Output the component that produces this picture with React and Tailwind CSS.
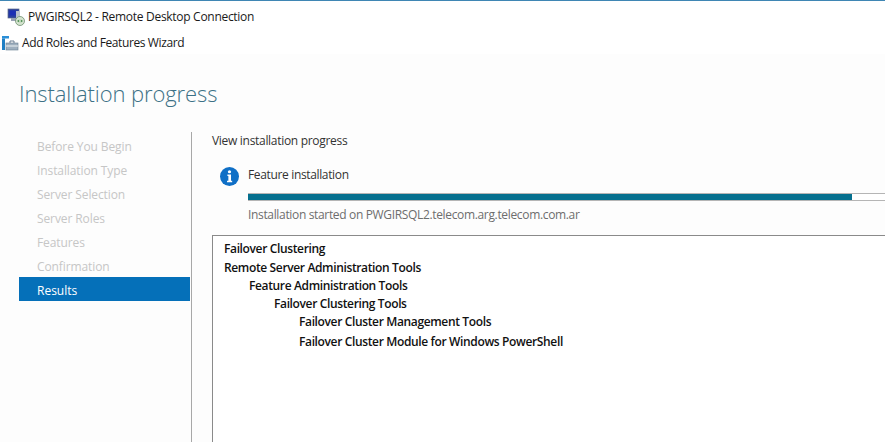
const STEPS = ['Before You Begin', 'Installation Type', 'Server Selection', 'Server Roles', 'Features', 'Confirmation'];

const RESULTS = [
  { label: 'Failover Clustering', indent: 'pl-0', height: 'h-[20px]' },
  { label: 'Remote Server Administration Tools', indent: 'pl-0', height: 'h-[18px]' },
  { label: 'Feature Administration Tools', indent: 'pl-[25px]', height: 'h-[18px]' },
  { label: 'Failover Clustering Tools', indent: 'pl-[50px]', height: 'h-[18px]' },
  { label: 'Failover Cluster Management Tools', indent: 'pl-[75px]', height: 'h-[18px]' },
  { label: 'Failover Cluster Module for Windows PowerShell', indent: 'pl-[75px]', height: 'h-[22px]' },
];

function RdpIcon() {
  return (
    <svg width="18" height="18" viewBox="0 0 18 18" className="shrink-0">
      <rect x="1" y="1" width="11" height="9" fill="#2a3f9e" stroke="#5a6a8a" strokeWidth="0.7" />
      <rect x="2.5" y="2.5" width="6" height="5" fill="#1c2fb5" />
      <rect x="4" y="10" width="7" height="3" fill="#9aa3b5" />
      <rect x="9" y="3" width="4" height="7" fill="#b9c0cc" />
      <circle cx="13" cy="13" r="4.5" fill="#d5e4cf" stroke="#6f8f70" strokeWidth="0.8" />
      <path d="M10.8 13h1.6M13.6 13h1.6M11.8 11.8l-1 1.2 1 1.2M14.2 11.8l1 1.2-1 1.2" stroke="#2f7a35" strokeWidth="0.8" fill="none" />
    </svg>
  );
}

function WizardIcon() {
  return (
    <svg width="17" height="16" viewBox="0 0 17 16" className="shrink-0">
      <rect x="0" y="1" width="7" height="2.5" fill="#2a8fd8" />
      <rect x="0" y="3.5" width="3" height="11.5" fill="#1f7fc4" />
      <rect x="4" y="8" width="12" height="7" fill="#9fb0bf" stroke="#6a7f92" strokeWidth="0.6" />
      <path d="M8 8V6h4v2" fill="none" stroke="#6a7f92" strokeWidth="1" />
      <rect x="4" y="10.5" width="12" height="1" fill="#eef1f4" />
    </svg>
  );
}

function InfoIcon() {
  return (
    <svg width="19" height="19" viewBox="0 0 20 20" className="shrink-0">
      <circle cx="10" cy="10" r="10" fill="#0f6fc6" />
      <circle cx="10" cy="5" r="1.7" fill="#fff" />
      <path d="M7.8 8h3.8v6.5h1.2V16H7.4v-1.5h1.4V9.5h-1z" fill="#fff" />
    </svg>
  );
}

export default function App() {
  return (
    <div className="w-[885px] h-[442px] overflow-hidden flex flex-col bg-[#fdfdfd] font-['Open_Sans','Noto_Sans',sans-serif] text-[12px] text-[#1a1a1a]">
      {/* RDP title bar */}
      <div className="h-[32px] shrink-0 bg-white border-t border-[#3f86b4] flex items-center pl-[7px] gap-[3px]">
        <RdpIcon />
        <span className="text-[12px] tracking-[-0.29px]">PWGIRSQL2 - Remote Desktop Connection</span>
      </div>

      {/* Wizard title bar */}
      <div className="h-[22px] shrink-0 bg-white flex items-center pl-[2px] gap-[3px]">
        <WizardIcon />
        <span className="text-[12px] tracking-[-0.39px]">Add Roles and Features Wizard</span>
      </div>

      <div className="h-[78px] shrink-0 pl-[19px] pt-[19px]">
        <h1 className="text-[22px] leading-[40px] font-light text-[#3c7186] tracking-[-0.1px]">Installation progress</h1>
      </div>

      <div className="flex-1 min-h-0 flex">
        {/* Steps */}
        <div className="w-[192px] shrink-0 pl-[19px] border-r border-[#a8a8a8] flex flex-col pt-[1px] pr-px">
          {STEPS.map((step) => (
            <div key={step} className="h-[24px] shrink-0 pl-[18px] pt-[4px] flex items-center text-[#c6c6c6] tracking-[-0.1px]">{step}</div>
          ))}
          <div className="h-[24px] shrink-0 pl-[18px] pt-[4px] flex items-center bg-[#0570b9] text-white">Results</div>
        </div>

        {/* Main */}
        <div className="flex-1 min-w-0 pl-[20px] flex flex-col">
          <div className="h-[18px] shrink-0 flex items-center tracking-[-0.3px] text-[#333]">View installation progress</div>

          <div className="flex mt-[16px] pl-[8px] gap-[9px] shrink-0">
            <div className="pt-[1px]"><InfoIcon /></div>
            <div className="flex-1 min-w-0">
              <div className="h-[18px] flex items-center tracking-[-0.35px] text-[#333]">Feature installation</div>
              <div className="mt-[9px] h-[8px] border-y border-[#b5b5b5] bg-white">
                <div className="h-full w-[604px] bg-[#05708f]" />
              </div>
              <div className="mt-[5px] h-[18px] flex items-center text-[#6d6d6d] tracking-[-0.34px] whitespace-nowrap">Installation started on PWGIRSQL2.telecom.arg.telecom.com.ar</div>
            </div>
          </div>

          <div className="mt-[11px] flex-1 min-h-0 bg-white border-t border-l border-[#8a8a8a] pl-[11px] pt-[3px] font-semibold text-[#111]">
            {RESULTS.map((r) => (
              <div key={r.label} className={`${r.height} ${r.indent} flex items-center tracking-[-0.36px] whitespace-nowrap`}>{r.label}</div>
            ))}
          </div>
        </div>
      </div>
    </div>
  );
}
